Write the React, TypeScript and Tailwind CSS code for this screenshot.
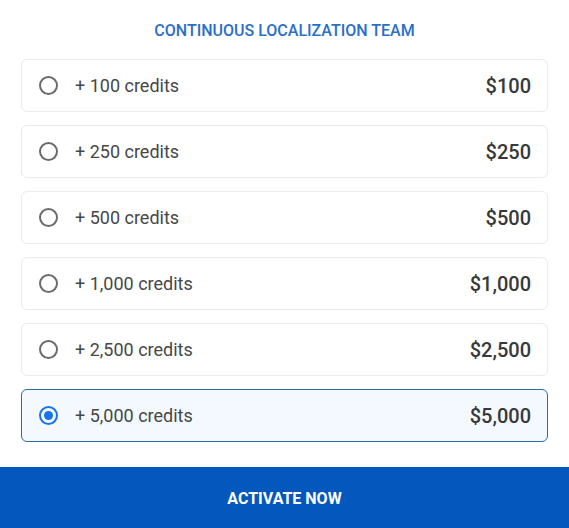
import React, { useState } from 'react';

const options = [
  { credits: '100', price: '$100' },
  { credits: '250', price: '$250' },
  { credits: '500', price: '$500' },
  { credits: '1,000', price: '$1,000' },
  { credits: '2,500', price: '$2,500' },
  { credits: '5,000', price: '$5,000' },
];

export default function App() {
  const [selected, setSelected] = useState(5);

  return (
    <div className="w-[569px] h-[528px] bg-white flex flex-col font-['Roboto',sans-serif] overflow-hidden">
      <h2 className="text-center text-[16px] leading-[20px] font-medium text-[#2a6fc9] uppercase pt-[21px]">
        Continuous Localization Team
      </h2>

      <div className="flex flex-col gap-[13px] px-[21px] mt-[18px]">
        {options.map((o, i) => {
          const active = i === selected;
          return (
            <button
              key={o.credits}
              onClick={() => setSelected(i)}
              className={`h-[53px] flex items-center rounded-[6px] border pl-[17px] pr-[16px] text-left ${
                active ? 'bg-[#f3f9fe] border-[#2b6ca8]' : 'bg-white border-[#ebebeb]'
              }`}
            >
              <span
                className={`w-[19px] h-[19px] rounded-full border-2 flex items-center justify-center shrink-0 ${
                  active ? 'border-[#1a73e8]' : 'border-[#6b6b6b]'
                }`}
              >
                {active && <span className="w-[9px] h-[9px] rounded-full bg-[#1a73e8]" />}
              </span>
              <span className="ml-[17px] text-[18px] text-[#474747] -mt-[1px]">+ {o.credits} credits</span>
              <span className="ml-auto text-[20px] font-medium text-[#383838] mt-[1px]">{o.price}</span>
            </button>
          );
        })}
      </div>

      <button className="mt-auto h-[61px] w-full bg-[#0457bc] text-white text-[16px] font-bold uppercase pt-[2px]">
        Activate Now
      </button>
    </div>
  );
}
